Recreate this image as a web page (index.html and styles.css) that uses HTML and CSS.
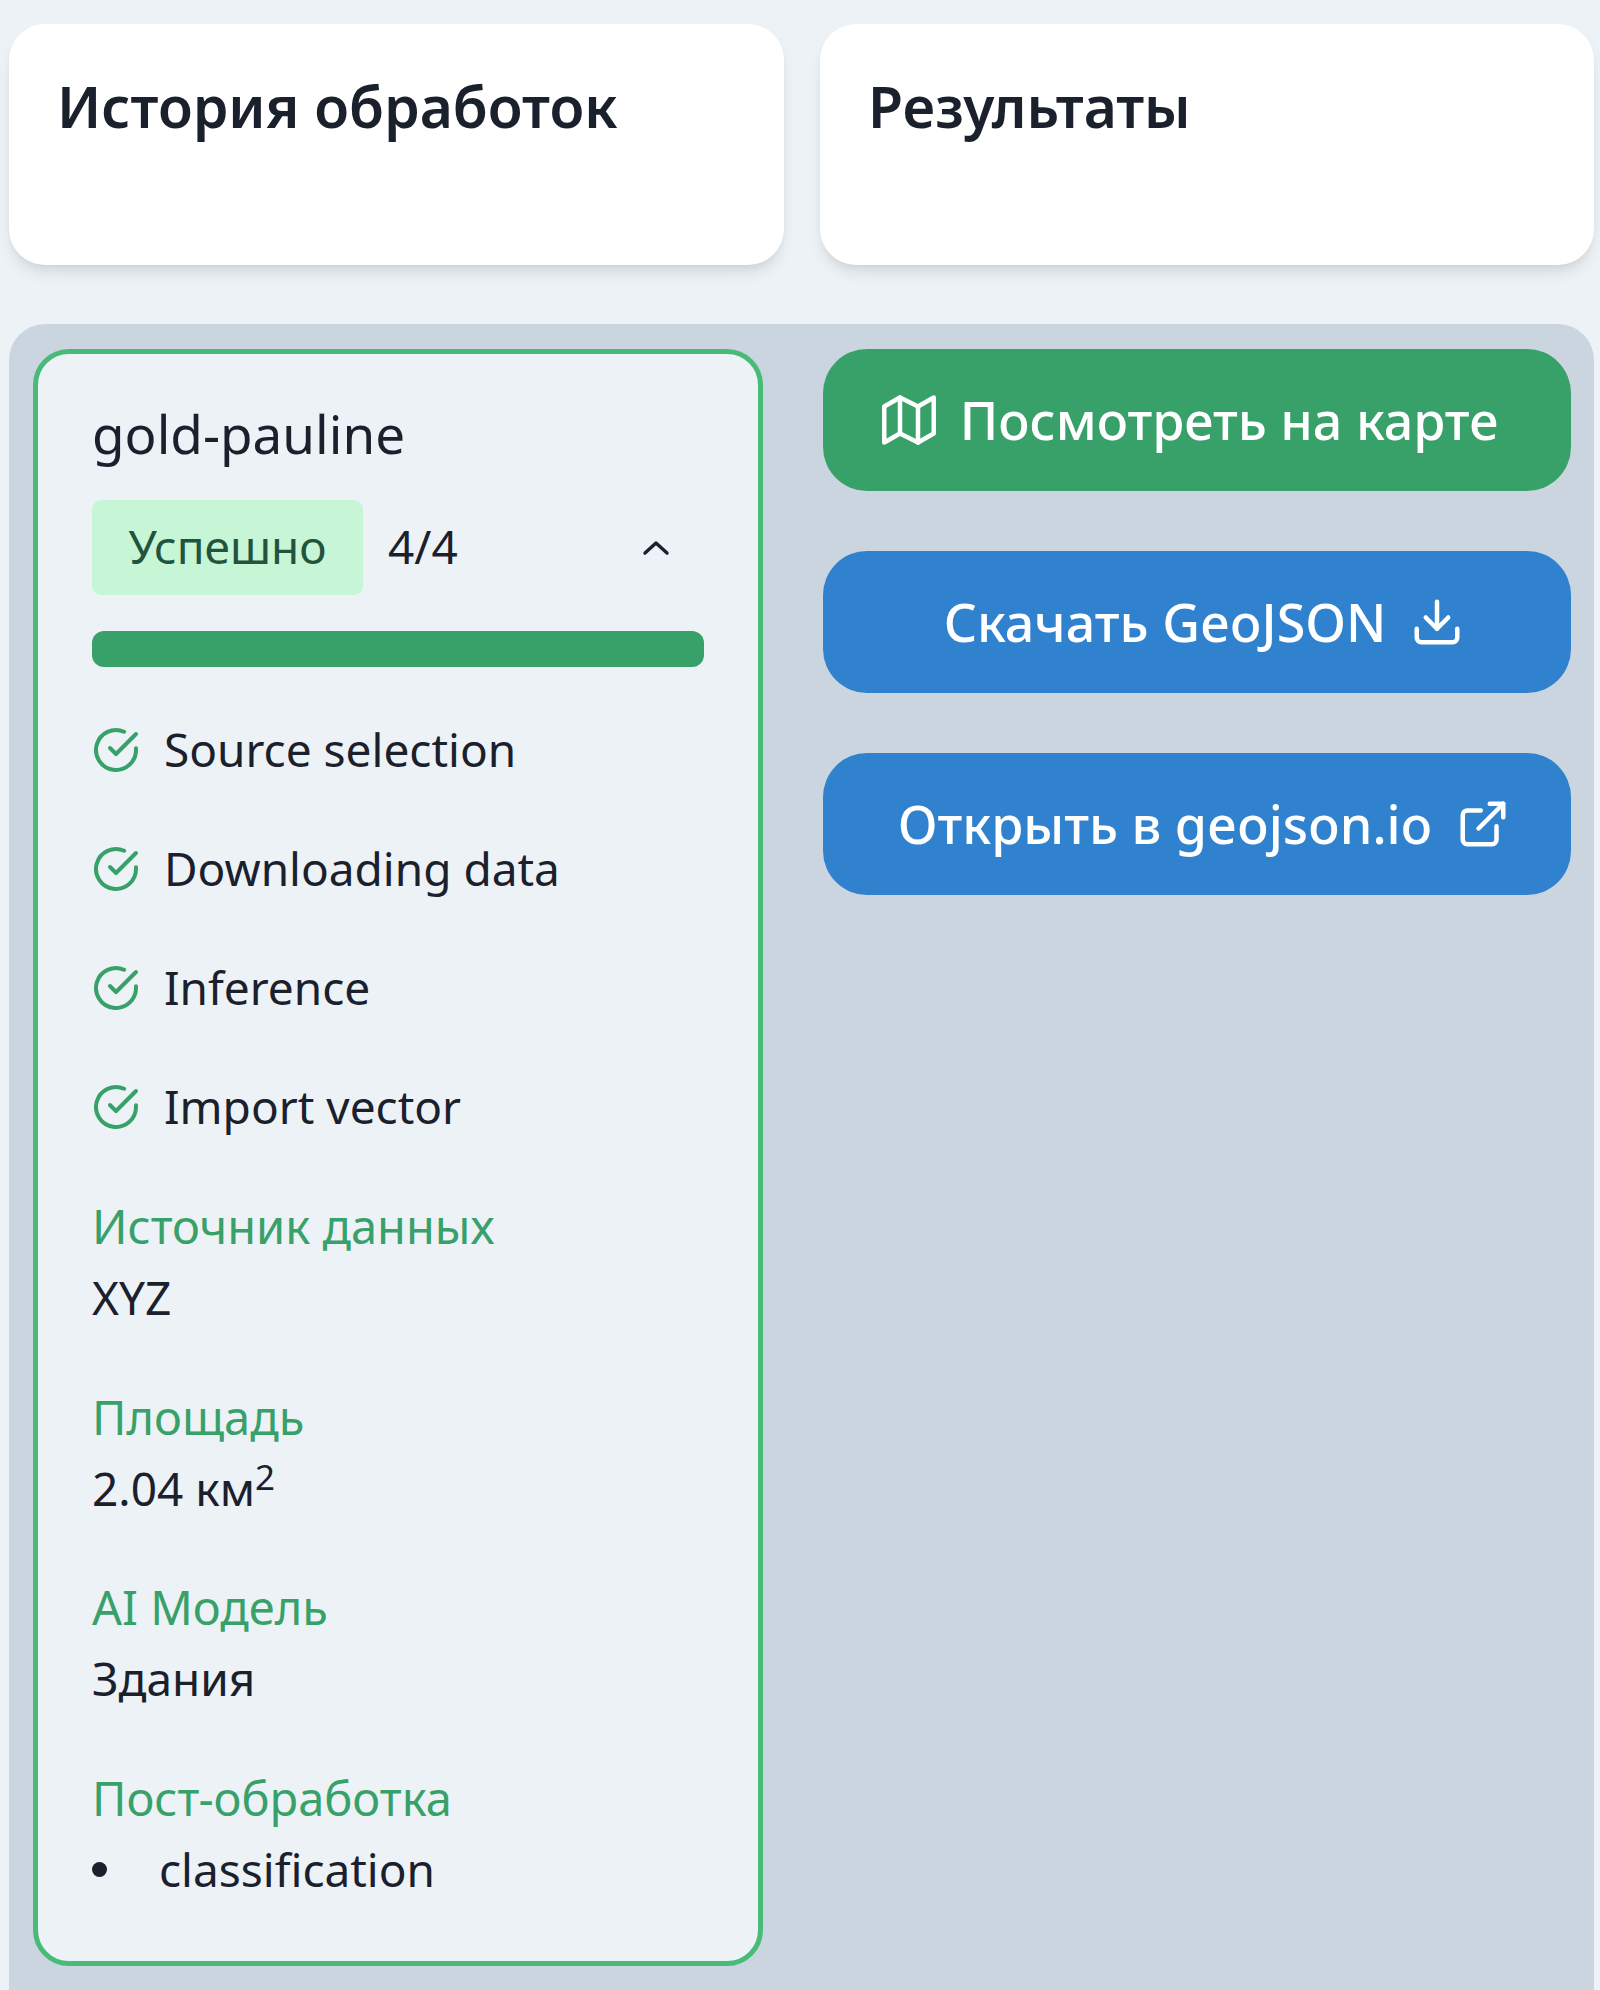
FILE: index.html
```html
<!DOCTYPE html>
<html lang="ru">
<head>
    <meta charset="UTF-8">
    <title>История обработок</title>
    <link rel="stylesheet" href="styles.css">
</head>
<body>
    <div class="top-row">
        <div class="top-card"><h2>История обработок</h2></div>
        <div class="top-card"><h2>Результаты</h2></div>
    </div>

    <main class="panel">
        <section class="job">
            <h3 class="job-name">gold-pauline</h3>
            <div class="job-status">
                <span class="badge">Успешно</span>
                <span class="job-count">4/4</span>
                <svg class="chevron" viewBox="0 0 30 18" fill="none" stroke="currentColor" stroke-width="3.4" stroke-linecap="round" stroke-linejoin="round"><polyline points="4 14 15 4 26 14"/></svg>
            </div>
            <div class="progress"></div>

            <ul class="steps">
                <li class="step">
                    <svg class="step-icon" viewBox="0 0 24 24" fill="none" stroke="currentColor" stroke-width="2" stroke-linecap="round" stroke-linejoin="round"><path d="M22 11.08V12a10 10 0 1 1-5.93-9.14"/><polyline points="22 4 12 14.01 9 11.01"/></svg>
                    Source selection
                </li>
                <li class="step">
                    <svg class="step-icon" viewBox="0 0 24 24" fill="none" stroke="currentColor" stroke-width="2" stroke-linecap="round" stroke-linejoin="round"><path d="M22 11.08V12a10 10 0 1 1-5.93-9.14"/><polyline points="22 4 12 14.01 9 11.01"/></svg>
                    Downloading data
                </li>
                <li class="step">
                    <svg class="step-icon" viewBox="0 0 24 24" fill="none" stroke="currentColor" stroke-width="2" stroke-linecap="round" stroke-linejoin="round"><path d="M22 11.08V12a10 10 0 1 1-5.93-9.14"/><polyline points="22 4 12 14.01 9 11.01"/></svg>
                    Inference
                </li>
                <li class="step">
                    <svg class="step-icon" viewBox="0 0 24 24" fill="none" stroke="currentColor" stroke-width="2" stroke-linecap="round" stroke-linejoin="round"><path d="M22 11.08V12a10 10 0 1 1-5.93-9.14"/><polyline points="22 4 12 14.01 9 11.01"/></svg>
                    Import vector
                </li>
            </ul>

            <div class="field">
                <div class="field-label">Источник данных</div>
                <div class="field-value">XYZ</div>
            </div>
            <div class="field">
                <div class="field-label">Площадь</div>
                <div class="field-value">2.04 км<sup>2</sup></div>
            </div>
            <div class="field">
                <div class="field-label">AI Модель</div>
                <div class="field-value">Здания</div>
            </div>
            <div class="field">
                <div class="field-label">Пост-обработка</div>
                <div class="field-value bullet">classification</div>
            </div>
        </section>

        <div class="actions">
            <a class="btn btn-green btn-lead">
                <svg class="btn-icon" viewBox="0 0 24 24" fill="none" stroke="currentColor" stroke-width="2" stroke-linecap="round" stroke-linejoin="round"><polygon points="1 6 1 22 8 18 16 22 23 18 23 2 16 6 8 2 1 6"/><line x1="8" y1="2" x2="8" y2="18"/><line x1="16" y1="6" x2="16" y2="22"/></svg>
                Посмотреть на карте
            </a>
            <a class="btn btn-blue btn-trail">
                Скачать GeoJSON
                <svg class="btn-icon" viewBox="0 0 24 24" fill="none" stroke="currentColor" stroke-width="2" stroke-linecap="round" stroke-linejoin="round"><path d="M21 15v4a2 2 0 0 1-2 2H5a2 2 0 0 1-2-2v-4"/><polyline points="7 10 12 15 17 10"/><line x1="12" y1="15" x2="12" y2="3"/></svg>
            </a>
            <a class="btn btn-blue btn-trail">
                Открыть в geojson.io
                <svg class="btn-icon" viewBox="0 0 24 24" fill="none" stroke="currentColor" stroke-width="2" stroke-linecap="round" stroke-linejoin="round"><path d="M18 13v6a2 2 0 0 1-2 2H5a2 2 0 0 1-2-2V8a2 2 0 0 1 2-2h6"/><polyline points="15 3 21 3 21 9"/><line x1="10" y1="14" x2="21" y2="3"/></svg>
            </a>
        </div>
    </main>
</body>
</html>
```

FILE: styles.css
```css
* {
    box-sizing: border-box;
}

body {
    font-family: "Noto Sans", "Open Sans", sans-serif;
    background-color: #edf2f7;
    color: #1a202c;
    margin: 0;
    height: 100vh;
    padding: 24px 6px 0 9px;
    display: flex;
    flex-direction: column;
}

.top-row {
    display: grid;
    grid-template-columns: 775px 774px;
    gap: 36px;
}

.top-card {
    background: #ffffff;
    border-radius: 36px;
    height: 241px;
    padding: 45px 48px;
    box-shadow: 0 10px 15px -3px rgba(0, 0, 0, 0.1), 0 4px 6px -2px rgba(0, 0, 0, 0.05);
}

h2 {
    margin: 0;
    font-size: 57px;
    font-weight: 600;
    line-height: 74px;
}

.panel {
    flex: 1;
    min-height: 0;
    margin-top: 59px;
    padding: 25px 24px 0 24px;
    background-color: #cbd5e0;
    border-radius: 36px 36px 0 0;
    display: grid;
    grid-template-columns: 730px 748px;
    gap: 60px;
    align-items: start;
}

.job {
    background-color: #edf2f7;
    border: 5px solid #48bb78;
    border-radius: 36px;
    padding: 54px 54px 56px;
}

.job-name {
    margin: 0;
    font-size: 53px;
    font-weight: 400;
    line-height: 51px;
}

.job-status {
    display: flex;
    align-items: center;
    margin-top: 41px;
    font-size: 46px;
}

.badge {
    width: 271px;
    height: 95px;
    display: flex;
    align-items: center;
    justify-content: center;
    padding-bottom: 3px;
    background-color: #c6f6d5;
    color: #22543d;
    border-radius: 9px;
}

.job-count {
    margin-left: 25px;
    padding-bottom: 3px;
}

.chevron {
    width: 30px;
    height: 18px;
    margin-left: auto;
    margin-right: 33px;
}

.progress {
    height: 36px;
    margin-top: 36px;
    background-color: #38a169;
    border-radius: 12px;
}

.steps {
    list-style: none;
    margin: 48px 0 0;
    padding: 0;
}

.step {
    display: flex;
    align-items: center;
    gap: 24px;
    height: 70px;
    padding-bottom: 2px;
    margin-bottom: 49px;
    font-size: 46px;
}

.step-icon {
    width: 48px;
    height: 48px;
    margin-top: 2px;
    color: #38a169;
    flex-shrink: 0;
}

.field {
    margin-bottom: 48.5px;
    line-height: 71px;
}

.field:last-child {
    margin-bottom: 0;
}

.field-label {
    color: #38a169;
    font-size: 47px;
}

.field-value {
    font-size: 46px;
}

.field-value sup {
    font-size: 35px;
    line-height: 0;
}

.bullet {
    display: flex;
    align-items: center;
}

.bullet::before {
    content: "";
    width: 15px;
    height: 15px;
    margin-right: 52px;
    border-radius: 50%;
    background-color: #1a202c;
}

.actions {
    display: flex;
    flex-direction: column;
    gap: 60px;
}

.btn {
    height: 142px;
    display: flex;
    align-items: center;
    justify-content: center;
    gap: 24px;
    padding-bottom: 2px;
    border-radius: 44px;
    color: #ffffff;
    font-size: 52px;
    font-weight: 500;
}

.btn-green {
    background-color: #38a169;
}

.btn-blue {
    background-color: #3182ce;
}

.btn-lead {
    padding-right: 14px;
}

.btn-trail {
    padding-left: 14px;
}

.btn-icon {
    width: 54px;
    height: 54px;
    margin-top: 2px;
    flex-shrink: 0;
}
```
